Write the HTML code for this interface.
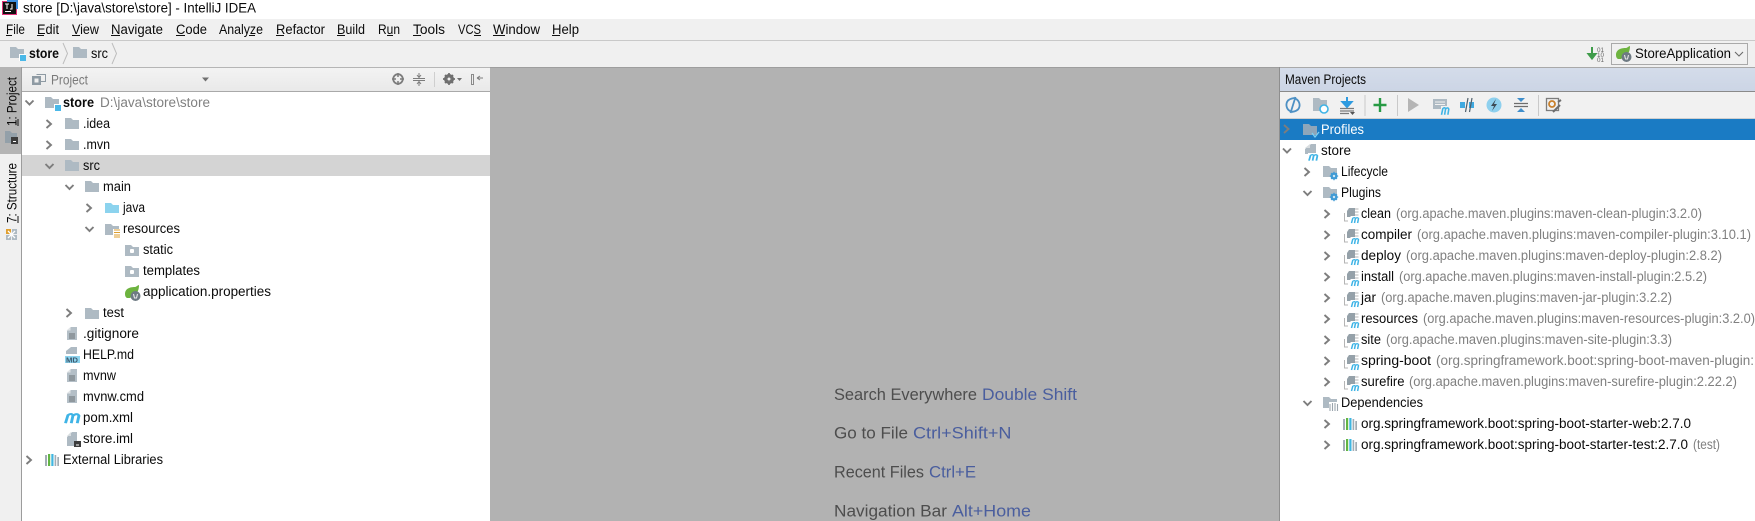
<!DOCTYPE html>
<html lang="en"><head><meta charset="utf-8"><title>store - IntelliJ IDEA</title>
<style>
html,body{margin:0;padding:0;width:1755px;height:521px;overflow:hidden;background:#f0f0f0}
svg{display:block}
text{font-family:"Liberation Sans",sans-serif;font-size:13.5px;fill:#0a0a0a;white-space:pre}
.g{fill:#808080}.b{font-weight:bold}.h{fill:#7a7a7a}
.e{font-size:17px;fill:#4d4d4d}.k{font-size:17px;fill:#4a5e9e}
</style></head><body>
<svg width="1755" height="521" viewBox="0 0 1755 521" xmlns="http://www.w3.org/2000/svg">
<defs>
<linearGradient id="hd" x1="0" y1="0" x2="0" y2="1"><stop offset="0" stop-color="#f3f3f3"/><stop offset="1" stop-color="#e9e9e9"/></linearGradient>
<linearGradient id="mh" x1="0" y1="0" x2="0" y2="1"><stop offset="0" stop-color="#d4dcea"/><stop offset="1" stop-color="#ccd5e5"/></linearGradient>
<path id="cr" d="M-2.5-4 2 0-2.5 4" fill="none" stroke="#7d7d7d" stroke-width="1.9"/>
<path id="cd" d="M-4-2 0 2 4-2" fill="none" stroke="#7d7d7d" stroke-width="1.9"/>
<path id="f" d="M0 0H6L8 2H14V11H0Z" fill="#aebac3"/>
<g id="mod"><path d="M0 0H6L8 2H14V11H0Z" fill="#aebac3"/><rect x="9" y="7" width="7" height="7" fill="#fff"/><rect x="10" y="8" width="6" height="6" fill="#4ab8e8"/></g>
<path id="m" d="M0 6 1 1.3Q2.6-.3 3.1 1.6L2.4 6M3.1 1.6Q4.8-.3 5.6 1.6L4.9 6" fill="none" stroke="#3fb4e6" stroke-width="1.2"/>
<g id="doc"><path d="M5 0H11V13H1V4Z" fill="#b4bfc7"/><path d="M4.5 0 .5 3.500H4.500Z" fill="#dfe3e6"/><path d="M3 7H9M3 9H9M3 11H9" stroke="#6a7075" stroke-width="1"/></g>
<g id="plug"><path d="M1.500 6V14H5" fill="none" stroke="#b4b4b4"/><path d="M4 4 6 1H12V10H4Z" fill="#95a1a9"/><path d="M12 2H15.500M12 5H15.500M12 8H15.500" stroke="#b4b4b4"/><rect x="7.500" y="9" width="8.500" height="7" fill="#fff"/><use href="#m" transform="translate(8.500 10) scale(1.250 1)"/></g>
<g id="lib"><rect x="0" y="1" width="2" height="11" fill="#a2adb5"/><rect x="3" y="0" width="2.2" height="12" fill="#62b543"/><rect x="6.3" y="0" width="2.2" height="12" fill="#40b6e0"/><rect x="9.6" y="1" width="1.6" height="11" fill="#a2adb5"/><rect x="12.3" y="3" width="1.7" height="9" fill="#a2adb5"/></g>
<g id="gear"><circle r="3.7" fill="none" stroke="#3f9bd6" stroke-width="2.1"/><path d="M0-5.6V5.6M-5.6 0H5.6M-4-4 4 4M4-4-4 4" stroke="#3f9bd6" stroke-width="1.5"/><circle r="1.3" fill="#fff"/></g>
<g id="spring"><path d="M0 9C0 3 6 2 10 2 11 2 13 0 14 0 14 4 13 7 11 8L5 13H2Q0 12 0 9Z" fill="#6db33f"/><circle cx="10.5" cy="11" r="5" fill="#6e7a83"/><path d="M8.500 9 9.500 13H11.500L12.500 9" fill="none" stroke="#e8e8e8" stroke-width="1.100"/></g>
</defs>

<rect width="1755" height="521" fill="#f0f0f0"/>
<!-- Title bar -->
<rect width="1755" height="19" fill="#fff"/>
<rect x="2" y="1" width="15" height="14" fill="#e0357a"/><rect x="7" y="0" width="11" height="9" fill="#3d8fe0"/><rect x="3" y="2" width="13" height="12" fill="#111"/>
<rect x="5" y="11" width="6" height="1" fill="#fff"/><path d="M5 4H9M7 4V9M12 4V9H10" fill="none" stroke="#fff" stroke-width="1"/>
<text x="23" y="12.5" textLength="233" lengthAdjust="spacingAndGlyphs">store [D:\java\store\store] - IntelliJ IDEA</text>

<!-- Menu -->
<text x="6" y="34" textLength="19" lengthAdjust="spacingAndGlyphs">File</text>
<text x="37" y="34" textLength="22" lengthAdjust="spacingAndGlyphs">Edit</text>
<text x="72" y="34" textLength="27" lengthAdjust="spacingAndGlyphs">View</text>
<text x="111" y="34" textLength="52" lengthAdjust="spacingAndGlyphs">Navigate</text>
<text x="176" y="34" textLength="31" lengthAdjust="spacingAndGlyphs">Code</text>
<text x="219" y="34" textLength="44" lengthAdjust="spacingAndGlyphs">Analyze</text>
<text x="276" y="34" textLength="49" lengthAdjust="spacingAndGlyphs">Refactor</text>
<text x="337" y="34" textLength="28" lengthAdjust="spacingAndGlyphs">Build</text>
<text x="378" y="34" textLength="22" lengthAdjust="spacingAndGlyphs">Run</text>
<text x="413" y="34" textLength="32" lengthAdjust="spacingAndGlyphs">Tools</text>
<text x="458" y="34" textLength="23" lengthAdjust="spacingAndGlyphs">VCS</text>
<text x="493" y="34" textLength="47" lengthAdjust="spacingAndGlyphs">Window</text>
<text x="552" y="34" textLength="27" lengthAdjust="spacingAndGlyphs">Help</text>
<path d="M6 35.500H12M37 35.500H44M72 35.500H80M111 35.500H120M176 35.500H185M249 35.500H255M276 35.500H284M337 35.500H345M387 35.500H393M413 35.500H421M474 35.500H481M493 35.500H505M552 35.500H560" stroke="#111" stroke-width="1"/>
<rect y="40" width="1755" height="1" fill="#c9c9c9"/>

<!-- Breadcrumb -->
<use href="#mod" x="10" y="47"/>
<text class="b" x="29" y="58" textLength="30" lengthAdjust="spacingAndGlyphs">store</text>
<path d="M63 43 67.500 53.500 63 64" fill="none" stroke="#bdbdbd"/>
<use href="#f" x="73" y="47"/>
<text x="91" y="58" textLength="17" lengthAdjust="spacingAndGlyphs">src</text>
<path d="M112 43 116.500 53.500 112 64" fill="none" stroke="#bdbdbd"/>

<!-- Run config -->
<path d="M1592 47V55M1588.500 54 1592 58.500 1595.500 54Z" fill="#3f9c4a" stroke="#3f9c4a" stroke-width="2"/>
<text x="1597" y="52" style="font-size:6px;fill:#666" textLength="7" lengthAdjust="spacingAndGlyphs">01</text>
<text x="1597" y="57" style="font-size:6px;fill:#666" textLength="7" lengthAdjust="spacingAndGlyphs">10</text>
<text x="1597" y="62" style="font-size:6px;fill:#666" textLength="7" lengthAdjust="spacingAndGlyphs">01</text>
<rect x="1611.500" y="43.500" width="136" height="21" fill="#f0f0f0" stroke="#a9a9a9"/>
<use href="#spring" x="1616" y="46"/>
<text x="1635" y="58" textLength="96" lengthAdjust="spacingAndGlyphs">StoreApplication</text>
<path d="M1735 52 1739 56 1743 52" fill="none" stroke="#6a6a6a" stroke-width="1.100"/>

<!-- Editor -->
<rect x="490" y="67" width="790" height="454" fill="#b2b2b2"/>
<rect x="490" y="67" width="790" height="1" fill="#9e9e9e"/>
<text class="e" x="834" y="400" textLength="143" lengthAdjust="spacingAndGlyphs">Search Everywhere</text>
<text class="k" x="982" y="400" textLength="95" lengthAdjust="spacingAndGlyphs">Double Shift</text>
<text class="e" x="834" y="438.500" textLength="74" lengthAdjust="spacingAndGlyphs">Go to File</text>
<text class="k" x="913" y="438.500" textLength="98.500" lengthAdjust="spacingAndGlyphs">Ctrl+Shift+N</text>
<text class="e" x="834" y="477.500" textLength="90" lengthAdjust="spacingAndGlyphs">Recent Files</text>
<text class="k" x="929" y="477.500" textLength="47" lengthAdjust="spacingAndGlyphs">Ctrl+E</text>
<text class="e" x="834" y="516.500" textLength="113" lengthAdjust="spacingAndGlyphs">Navigation Bar</text>
<text class="k" x="952" y="516.500" textLength="79" lengthAdjust="spacingAndGlyphs">Alt+Home</text>

<!-- Left stripe -->
<rect x="0" y="67" width="21" height="454" fill="#f0f0f0"/>
<rect x="0" y="67" width="21" height="87" fill="#b4b4b4"/>
<rect x="21" y="67" width="1" height="454" fill="#9c9c9c"/>
<text transform="translate(16.500 126) rotate(-90)" textLength="49" lengthAdjust="spacingAndGlyphs">1: Project</text>
<rect x="17.500" y="119" width="1" height="7" fill="#111"/>
<path d="M5 131H10L12 133H17V143H5Z" fill="#93a0a9"/><rect x="11" y="137" width="7" height="7" fill="#3c3c3c"/><rect x="13" y="141" width="3" height="1" fill="#fff"/>
<text transform="translate(16.500 223) rotate(-90)" textLength="60" lengthAdjust="spacingAndGlyphs">7: Structure</text>
<rect x="17.500" y="216" width="1" height="7" fill="#111"/>
<rect x="6" y="229" width="5" height="5" fill="#e0a030"/><path d="M12 229H17V234H12ZM6 235H11V240H6ZM12 235H17V240H12Z" fill="#aebac3"/><path d="M8 231 15 238M15 231 8 238" stroke="#fff" stroke-width="1.300"/>

<!-- Project panel -->
<rect x="22" y="67" width="468" height="1" fill="#b5b5b5"/>
<rect x="22" y="68" width="468" height="23" fill="url(#hd)"/>
<rect x="22" y="91" width="468" height="1" fill="#a9a9a9"/>
<rect x="22" y="92" width="468" height="429" fill="#fff"/>
<path d="M36.500 74.500H45.500V81.500H41" fill="none" stroke="#8e9aa3"/><rect x="32" y="76" width="9" height="9" fill="#8e9aa3"/><rect x="34.500" y="78.500" width="4" height="4" fill="#eee"/>
<text class="h" x="51" y="84.500" textLength="37" lengthAdjust="spacingAndGlyphs">Project</text>
<path d="M202 77.500H209L205.500 81.500Z" fill="#707070"/>
<circle cx="398" cy="79" r="4.800" fill="none" stroke="#7c7c7c" stroke-width="1.800"/><path d="M398 73V77M398 81V85M392 79H396M400 79H404" stroke="#7c7c7c" stroke-width="1.500"/>
<path d="M413 78.500H425M413 80.500H425M419 73V77.500M419 81.500V86M417 75 419 77.500 421 75M417 84 419 81.500 421 84" fill="none" stroke="#7c7c7c"/>
<rect x="434" y="72" width="1" height="15" fill="#cfcfcf"/>
<circle cx="449" cy="79" r="3.800" fill="none" stroke="#6f6f6f" stroke-width="2.400"/><path d="M449 73V85M443 79H455M445 75 453 83M453 75 445 83" stroke="#6f6f6f" stroke-width="1.700"/><circle cx="449" cy="79" r="1.500" fill="#eee"/>
<path d="M457 78H462L459.500 81Z" fill="#707070"/>
<rect x="471" y="74" width="3" height="11" fill="#8a8a8a"/><rect x="472" y="75" width="1" height="9" fill="#eee"/><path d="M477 78H483M477 78 480 76M477 78 480 80" fill="none" stroke="#7c7c7c"/>

<!-- Tree -->
<rect x="22" y="155" width="468" height="21" fill="#d4d4d4"/>
<use href="#cd" x="29.500" y="102.500"/><use href="#mod" x="45" y="97"/>
<text class="b" x="63" y="107" textLength="31" lengthAdjust="spacingAndGlyphs">store</text>
<text class="g" x="100" y="107" textLength="110" lengthAdjust="spacingAndGlyphs">D:\java\store\store</text>
<use href="#cr" x="49" y="124"/><use href="#f" x="65" y="118"/><text x="83" y="128" textLength="27" lengthAdjust="spacingAndGlyphs">.idea</text>
<use href="#cr" x="49" y="145"/><use href="#f" x="65" y="139"/><text x="83" y="149" textLength="27" lengthAdjust="spacingAndGlyphs">.mvn</text>
<use href="#cd" x="49.500" y="166"/><use href="#f" x="65" y="160"/><text x="83" y="170" textLength="17" lengthAdjust="spacingAndGlyphs">src</text>
<use href="#cd" x="69.500" y="187"/><use href="#f" x="85" y="181"/><text x="103" y="191" textLength="28" lengthAdjust="spacingAndGlyphs">main</text>
<use href="#cr" x="89" y="208"/><path d="M105 203H111L113 205H119V213H105Z" fill="#8cd3ee"/><text x="123" y="212" textLength="22" lengthAdjust="spacingAndGlyphs">java</text>
<use href="#cd" x="89.500" y="229"/><use href="#f" x="105" y="224"/><rect x="113" y="229" width="8" height="9" fill="#fff"/><path d="M114 230H120M114 232.500H120M114 235H120M114 237H120" stroke="#dd9f30" stroke-width="1"/>
<text x="123" y="233" textLength="57" lengthAdjust="spacingAndGlyphs">resources</text>
<use href="#f" x="125" y="245"/><rect x="130" y="249" width="4" height="4" rx="1" fill="#fff"/><text x="143" y="254" textLength="30" lengthAdjust="spacingAndGlyphs">static</text>
<use href="#f" x="125" y="266"/><rect x="130" y="270" width="4" height="4" rx="1" fill="#fff"/><text x="143" y="275" textLength="57" lengthAdjust="spacingAndGlyphs">templates</text>
<use href="#spring" x="125" y="285"/><text x="143" y="296" textLength="128" lengthAdjust="spacingAndGlyphs">application.properties</text>
<use href="#cr" x="69" y="313"/><use href="#f" x="85" y="308"/><text x="103" y="317" textLength="21" lengthAdjust="spacingAndGlyphs">test</text>
<use href="#doc" x="66" y="327"/><text x="83" y="338" textLength="56" lengthAdjust="spacingAndGlyphs">.gitignore</text>
<path d="M71 347H77V354H66V351Z" fill="#aebac3"/><rect x="65" y="356" width="15" height="7" fill="#8cd3ee"/><text x="66" y="362.500" style="font-size:7px;font-weight:bold;fill:#3d5a6e" textLength="12" lengthAdjust="spacingAndGlyphs">MD</text>
<text x="83" y="359" textLength="51" lengthAdjust="spacingAndGlyphs">HELP.md</text>
<use href="#doc" x="66" y="369"/><text x="83" y="380" textLength="33" lengthAdjust="spacingAndGlyphs">mvnw</text>
<use href="#doc" x="66" y="390"/><text x="83" y="401" textLength="61" lengthAdjust="spacingAndGlyphs">mvnw.cmd</text>
<use href="#m" transform="translate(65.500 413) scale(2.400 1.700)"/><text x="83" y="422" textLength="50" lengthAdjust="spacingAndGlyphs">pom.xml</text>
<path d="M72 432H77V446H67V437Z" fill="#aebac3"/><path d="M71 432 67 436H71Z" fill="#d8dde0"/><rect x="74" y="441" width="7" height="6" fill="#3c3c3c"/><rect x="76" y="444.500" width="3" height="1" fill="#fff"/><text x="83" y="443" textLength="50" lengthAdjust="spacingAndGlyphs">store.iml</text>
<use href="#cr" x="29" y="460"/><use href="#lib" x="45" y="454"/><text x="63" y="464" textLength="100" lengthAdjust="spacingAndGlyphs">External Libraries</text>

<!-- Maven panel -->
<rect x="1279" y="67" width="1" height="454" fill="#8e8e8e"/>
<rect x="1280" y="67" width="475" height="1" fill="#a9a9a9"/>
<rect x="1280" y="68" width="475" height="23" fill="url(#mh)"/>
<rect x="1280" y="91" width="475" height="1" fill="#8a8a8a"/>
<rect x="1280" y="92" width="475" height="26" fill="#f1f1f1"/>
<rect x="1280" y="118" width="475" height="1" fill="#cfcfcf"/>
<rect x="1280" y="119" width="475" height="21" fill="#1a7bc4"/>
<rect x="1280" y="140" width="475" height="381" fill="#fff"/>
<text x="1285" y="84" textLength="81" lengthAdjust="spacingAndGlyphs">Maven Projects</text>

<!-- Toolbar icons -->
<path d="M1291 111.500A7 7 0 0 1 1288 100.500Q1291 98 1296 98M1295 98.500A7 7 0 0 1 1298 109.500Q1295 112 1290 112M1295.500 97 1290.500 113" fill="none" stroke="#4d90c4" stroke-width="1.800"/>
<path d="M1313 98H1319L1321 100H1327V111H1313Z" fill="#aebac3"/><circle cx="1324" cy="109" r="4" fill="#fff" stroke="#3fb4e6" stroke-width="1.600"/>
<path d="M1347 97V103M1342.500 102H1351.500L1347 107Z" fill="#2e9be0" stroke="#2e9be0" stroke-width="2"/><path d="M1340 108.500H1354M1340 111H1354M1340 113.500H1349" stroke="#7b7b7b" stroke-width="1.200"/><path d="M1350 112H1355L1352.500 115Z" fill="#555"/>
<rect x="1364.500" y="95" width="1" height="21" fill="#c9c9c9"/>
<path d="M1380 98V112M1373.500 105H1386.500" stroke="#279a44" stroke-width="2.400"/>
<rect x="1397" y="95" width="1" height="21" fill="#c9c9c9"/>
<path d="M1408 98 1419 105 1408 112Z" fill="#b5b5b5"/>
<rect x="1433" y="99" width="14" height="10" fill="#aebac3"/><path d="M1435 102H1445M1435 104.500H1445" stroke="#f1f1f1"/><rect x="1441" y="106" width="8" height="8" fill="#f1f1f1"/><use href="#m" transform="translate(1441.500 107) scale(1.300)"/>
<rect x="1460" y="102" width="5" height="6" fill="#3fa9e0"/><rect x="1469" y="102" width="5" height="6" fill="#3fa9e0"/><path d="M1465.500 112 1468 98M1469.500 112 1472 98" stroke="#50606c" stroke-width="1.200"/>
<circle cx="1494" cy="105" r="7.500" fill="#8ed0ee"/><path d="M1496 99 1491 106H1494L1492 111 1497 104H1494Z" fill="#3c4a55"/>
<path d="M1514 103.500H1528M1514 106.500H1528" stroke="#6d6d6d" stroke-width="1.300"/><path d="M1517 98H1525L1521 102ZM1517 112H1525L1521 108Z" fill="#3f8ecb"/>
<rect x="1538" y="95" width="1" height="21" fill="#c9c9c9"/>
<rect x="1546.500" y="98.500" width="12" height="12" fill="none" stroke="#7c7c7c" stroke-width="1.300"/><circle cx="1552" cy="104" r="3" fill="#f1f1f1" stroke="#c9812d" stroke-width="1.800"/><path d="M1553 112 1560 105M1558 102 1561 100" stroke="#6d6d6d" stroke-width="2"/>

<!-- Maven tree -->
<use href="#cr" x="1286.500" y="129"/>
<g><path d="M1303 124H1309L1311 126H1317V135H1303Z" fill="#8ea6ba"/><path d="M1312 133 1315 137 1319 132" fill="none" stroke="#7fd0f2" stroke-width="1.300"/></g>
<text x="1321" y="134" style="fill:#fff" textLength="43" lengthAdjust="spacingAndGlyphs">Profiles</text>
<use href="#cd" x="1287" y="150.500"/>
<g><path d="M1311 144H1316V154H1305V149Z" fill="#aebac3"/><path d="M1310 144 1305 148H1310Z" fill="#d8dde0"/><rect x="1308" y="153" width="11" height="8" fill="#fff"/><use href="#m" transform="translate(1309 154) scale(1.500 1.100)"/></g>
<text x="1321" y="155" textLength="30" lengthAdjust="spacingAndGlyphs">store</text>
<use href="#cr" x="1307" y="172"/><use href="#f" x="1323" y="166"/><use href="#gear" transform="translate(1334 176) scale(.75)"/>
<text x="1341" y="176" textLength="47" lengthAdjust="spacingAndGlyphs">Lifecycle</text>
<use href="#cd" x="1307.500" y="193"/><use href="#f" x="1323" y="187"/><use href="#gear" transform="translate(1334 197) scale(.75)"/>
<text x="1341" y="197" textLength="40" lengthAdjust="spacingAndGlyphs">Plugins</text>

<use href="#cr" x="1327" y="214"/><use href="#plug" x="1343" y="207"/><text x="1361" y="218" textLength="30" lengthAdjust="spacingAndGlyphs">clean</text><text class="g" x="1396" y="218" textLength="306" lengthAdjust="spacingAndGlyphs">(org.apache.maven.plugins:maven-clean-plugin:3.2.0)</text>
<use href="#cr" x="1327" y="235"/><use href="#plug" x="1343" y="228"/><text x="1361" y="239" textLength="51" lengthAdjust="spacingAndGlyphs">compiler</text><text class="g" x="1417" y="239" textLength="334" lengthAdjust="spacingAndGlyphs">(org.apache.maven.plugins:maven-compiler-plugin:3.10.1)</text>
<use href="#cr" x="1327" y="256"/><use href="#plug" x="1343" y="249"/><text x="1361" y="260" textLength="40" lengthAdjust="spacingAndGlyphs">deploy</text><text class="g" x="1406" y="260" textLength="316" lengthAdjust="spacingAndGlyphs">(org.apache.maven.plugins:maven-deploy-plugin:2.8.2)</text>
<use href="#cr" x="1327" y="277"/><use href="#plug" x="1343" y="270"/><text x="1361" y="281" textLength="33" lengthAdjust="spacingAndGlyphs">install</text><text class="g" x="1399" y="281" textLength="308" lengthAdjust="spacingAndGlyphs">(org.apache.maven.plugins:maven-install-plugin:2.5.2)</text>
<use href="#cr" x="1327" y="298"/><use href="#plug" x="1343" y="291"/><text x="1361" y="302" textLength="15" lengthAdjust="spacingAndGlyphs">jar</text><text class="g" x="1381" y="302" textLength="291" lengthAdjust="spacingAndGlyphs">(org.apache.maven.plugins:maven-jar-plugin:3.2.2)</text>
<use href="#cr" x="1327" y="319"/><use href="#plug" x="1343" y="312"/><text x="1361" y="323" textLength="57" lengthAdjust="spacingAndGlyphs">resources</text><text class="g" x="1423" y="323" textLength="332" lengthAdjust="spacingAndGlyphs">(org.apache.maven.plugins:maven-resources-plugin:3.2.0)</text>
<use href="#cr" x="1327" y="340"/><use href="#plug" x="1343" y="333"/><text x="1361" y="344" textLength="20" lengthAdjust="spacingAndGlyphs">site</text><text class="g" x="1386" y="344" textLength="286" lengthAdjust="spacingAndGlyphs">(org.apache.maven.plugins:maven-site-plugin:3.3)</text>
<use href="#cr" x="1327" y="361"/><use href="#plug" x="1343" y="354"/><text x="1361" y="365" textLength="70" lengthAdjust="spacingAndGlyphs">spring-boot</text><text class="g" x="1436" y="365" textLength="318" lengthAdjust="spacingAndGlyphs">(org.springframework.boot:spring-boot-maven-plugin:</text>
<use href="#cr" x="1327" y="382"/><use href="#plug" x="1343" y="375"/><text x="1361" y="386" textLength="43.500" lengthAdjust="spacingAndGlyphs">surefire</text><text class="g" x="1409" y="386" textLength="328" lengthAdjust="spacingAndGlyphs">(org.apache.maven.plugins:maven-surefire-plugin:2.22.2)</text>

<use href="#cd" x="1307.500" y="403"/><use href="#f" x="1323" y="397"/><rect x="1329" y="402" width="10" height="9" fill="#fff"/><path d="M1330 404V411M1332.500 403V411M1335 403V411M1337.500 404V411" stroke="#9aa5ad" stroke-width="1.100"/>
<text x="1341" y="407" textLength="82" lengthAdjust="spacingAndGlyphs">Dependencies</text>
<use href="#cr" x="1327" y="424"/><use href="#lib" x="1343" y="418"/><text x="1361" y="428" textLength="330" lengthAdjust="spacingAndGlyphs">org.springframework.boot:spring-boot-starter-web:2.7.0</text>
<use href="#cr" x="1327" y="445"/><use href="#lib" x="1343" y="439"/><text x="1361" y="449" textLength="327" lengthAdjust="spacingAndGlyphs">org.springframework.boot:spring-boot-starter-test:2.7.0</text><text class="g" x="1693" y="449" textLength="27" lengthAdjust="spacingAndGlyphs">(test)</text>
</svg>
</body></html>
